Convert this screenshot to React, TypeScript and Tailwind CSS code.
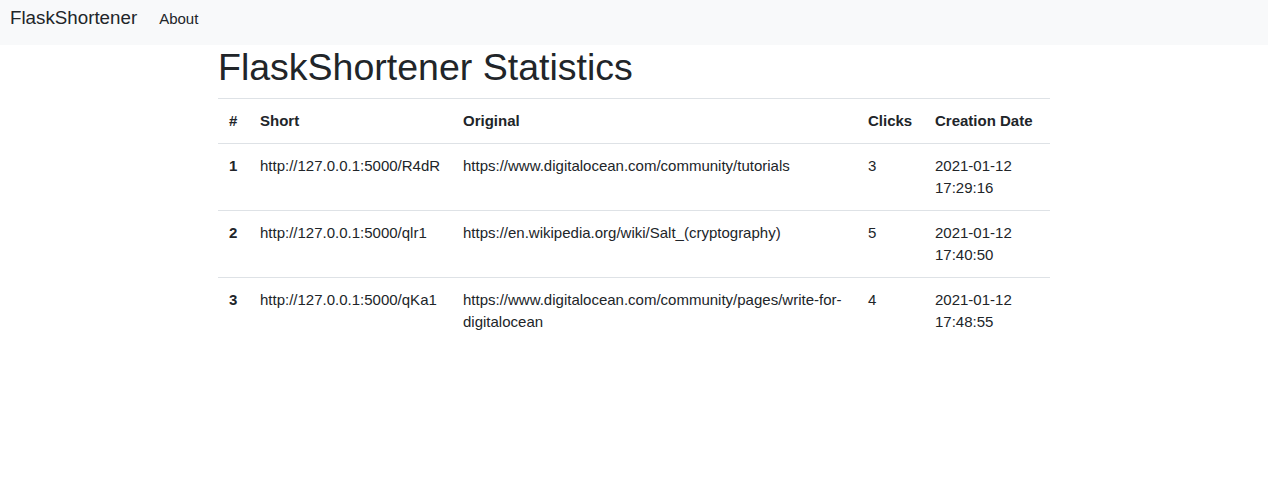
import React from 'react';

interface IUrlRow {
  id: number;
  short: string;
  original: string;
  clicks: number;
  created: string;
}

const rows: IUrlRow[] = [
  {
    id: 1,
    short: 'http://127.0.0.1:5000/R4dR',
    original: 'https://www.digitalocean.com/community/tutorials',
    clicks: 3,
    created: '2021-01-12 17:29:16',
  },
  {
    id: 2,
    short: 'http://127.0.0.1:5000/qlr1',
    original: 'https://en.wikipedia.org/wiki/Salt_(cryptography)',
    clicks: 5,
    created: '2021-01-12 17:40:50',
  },
  {
    id: 3,
    short: 'http://127.0.0.1:5000/qKa1',
    original: 'https://www.digitalocean.com/community/pages/write-for-digitalocean',
    clicks: 4,
    created: '2021-01-12 17:48:55',
  },
];

const Navbar: React.FC = () => (
  <nav className="h-[45px] bg-[#f8f9fa] flex items-baseline pt-[4px] pl-[10px]">
    <a className="text-[18.75px] leading-[28px] text-[#212529] mr-[15px]" href="#">
      FlaskShortener
    </a>
    <a className="text-[15px] leading-[22px] text-[#212529] px-[7px]" href="#">
      About
    </a>
  </nav>
);

const App: React.FC = () => {
  const cell = 'px-[11px] py-[11px] leading-[22px] border-t border-[#dee2e6] align-top';

  return (
    <div className="min-h-screen bg-white text-[#212529] font-['Liberation_Sans',Arial,sans-serif] text-[15px]">
      <Navbar />
      <div className="w-[832px] mx-auto">
        <h1 className="text-[37.5px] leading-[45px] mb-[8px]">FlaskShortener Statistics</h1>
        <table className="w-full table-fixed border-collapse">
          <colgroup>
            <col className="w-[31px]" />
            <col className="w-[203px]" />
            <col className="w-[405px]" />
            <col className="w-[67px]" />
            <col className="w-[126px]" />
          </colgroup>
          <thead>
            <tr className="text-left font-bold">
              <th className={cell}>#</th>
              <th className={cell}>Short</th>
              <th className={cell}>Original</th>
              <th className={cell}>Clicks</th>
              <th className={cell}>Creation Date</th>
            </tr>
          </thead>
          <tbody>
            {rows.map((row) => (
              <tr key={row.id}>
                <th className={`${cell} text-left font-bold`}>{row.id}</th>
                <td className={cell}>{row.short}</td>
                <td className={cell}>{row.original}</td>
                <td className={cell}>{row.clicks}</td>
                <td className={cell}>{row.created}</td>
              </tr>
            ))}
          </tbody>
        </table>
      </div>
    </div>
  );
};

export default App;
